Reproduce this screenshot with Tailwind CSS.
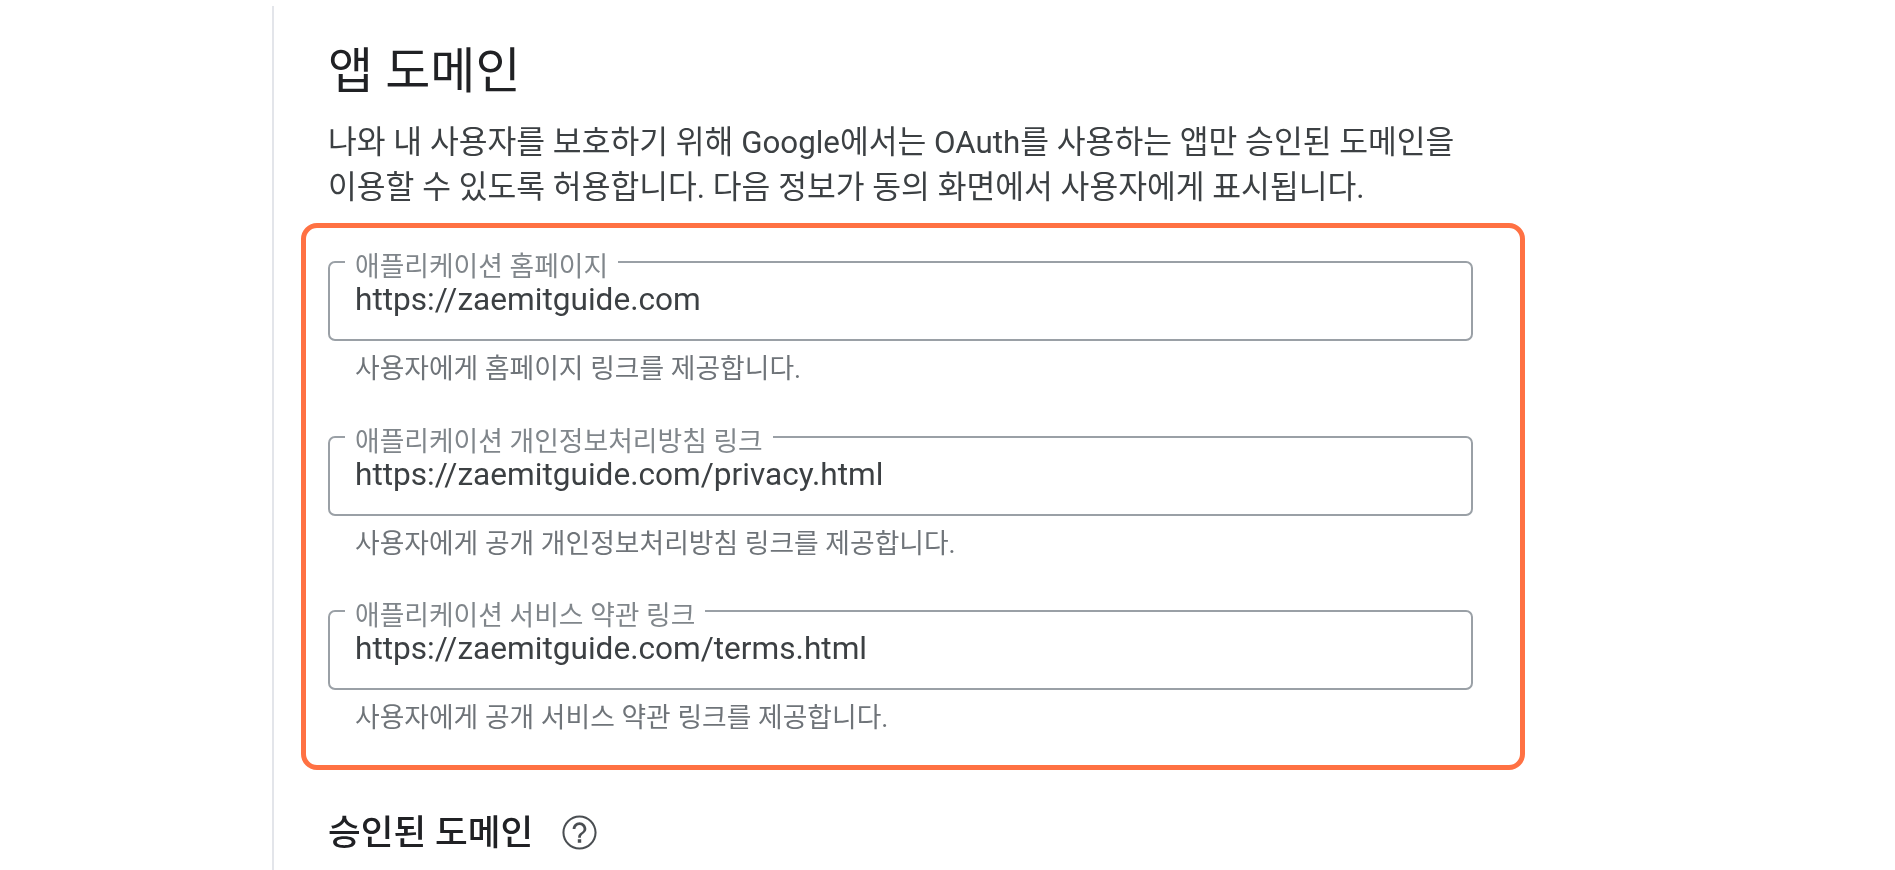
<!DOCTYPE html>
<html lang="ko">
<head>
    <meta charset="UTF-8">
    <title>앱 도메인</title>
    <script src="https://cdn.jsdelivr.net/npm/@tailwindcss/browser@4"></script>
</head>
<body class="bg-white h-[870px] overflow-hidden font-['Roboto','Noto_Sans_CJK_KR',sans-serif]">
    <div class="ml-[272px] mt-[6px] w-[1260px] h-[864px] border-l-2 border-[#e3e5ea] pl-[54px] pt-[42px] blur-[0.5px]">
        <h1 class="text-[#202124] text-[49px] leading-[48px]">앱 도메인</h1>
        <p class="text-[#3c4043] text-[31.3px] leading-[45px] mt-[24px] whitespace-nowrap">나와 내 사용자를 보호하기 위해 Google에서는 OAuth를 사용하는 앱만 승인된 도메인을<br>이용할 수 있도록 허용합니다. 다음 정보가 동의 화면에서 사용자에게 표시됩니다.</p>

        <div class="-ml-[27px] mt-[13px] w-[1224px] h-[547px] border-[5px] border-[#ff7143] rounded-[16px] pl-[22px] pt-[33px]">
            <div class="h-[174.5px]">
                <div class="relative w-[1145px] h-[80px] border-2 border-[#9aa0a6] rounded-[7px] px-[25px] pt-[19px] text-[#3c4043] text-[31.6px] leading-[36px]">
                    https://zaemitguide.com
                    <span class="absolute left-[15px] -top-[11px] bg-white px-[10px] text-[#80868b] text-[26.8px] leading-[30px]">애플리케이션 홈페이지</span>
                </div>
                <p class="text-[#6f7479] text-[26.8px] leading-[28px] mt-[14px] pl-[27px]">사용자에게 홈페이지 링크를 제공합니다.</p>
            </div>
            <div class="h-[174.5px]">
                <div class="relative w-[1145px] h-[80px] border-2 border-[#9aa0a6] rounded-[7px] px-[25px] pt-[19px] text-[#3c4043] text-[31.6px] leading-[36px]">
                    https://zaemitguide.com/privacy.html
                    <span class="absolute left-[15px] -top-[11px] bg-white px-[10px] text-[#80868b] text-[26.8px] leading-[30px]">애플리케이션 개인정보처리방침 링크</span>
                </div>
                <p class="text-[#6f7479] text-[26.8px] leading-[28px] mt-[14px] pl-[27px]">사용자에게 공개 개인정보처리방침 링크를 제공합니다.</p>
            </div>
            <div>
                <div class="relative w-[1145px] h-[80px] border-2 border-[#9aa0a6] rounded-[7px] px-[25px] pt-[19px] text-[#3c4043] text-[31.6px] leading-[36px]">
                    https://zaemitguide.com/terms.html
                    <span class="absolute left-[15px] -top-[11px] bg-white px-[10px] text-[#80868b] text-[26.8px] leading-[30px]">애플리케이션 서비스 약관 링크</span>
                </div>
                <p class="text-[#6f7479] text-[26.8px] leading-[28px] mt-[14px] pl-[27px]">사용자에게 공개 서비스 약관 링크를 제공합니다.</p>
            </div>
        </div>

        <div class="flex items-center gap-[26px] mt-[42px]">
            <h2 class="text-[#202124] text-[35.6px] leading-[40px] font-medium">승인된 도메인</h2>
            <svg class="w-[41px] h-[41px]" viewBox="0 0 24 24" fill="#4a4e52"><path d="M11 18h2v-2h-2v2zm1-16C6.48 2 2 6.48 2 12s4.48 10 10 10 10-4.48 10-10S17.52 2 12 2zm0 18.8c-4.85 0-8.8-3.95-8.8-8.8S7.15 3.2 12 3.2s8.8 3.95 8.8 8.8-3.95 8.8-8.8 8.8zM12 6c-2.21 0-4 1.79-4 4h1.6c0-1.32 1.08-2.4 2.4-2.4s2.4 1.08 2.4 2.4c0 2.1-3.2 2-3.2 5h1.6c0-2.2 3.2-2.6 3.2-5 0-2.21-1.79-4-4-4z"/></svg>
        </div>
    </div>
</body>
</html>
